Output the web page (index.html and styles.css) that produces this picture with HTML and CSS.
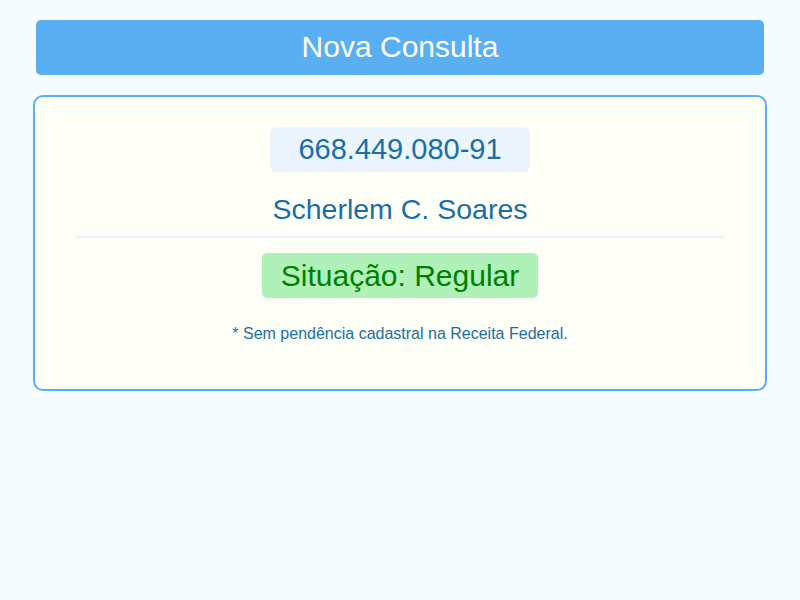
FILE: index.html
```html
<!DOCTYPE html>
<html lang="pt-BR">
<head>
<meta charset="utf-8">
<title>Consulta</title>
<link rel="stylesheet" href="styles.css">
</head>
<body>
<div class="page">
  <button class="new-btn">Nova Consulta</button>
  <section class="card">
    <div class="cpf">668.449.080-91</div>
    <div class="name">Scherlem C. Soares</div>
    <hr class="divider">
    <div class="status">Situação: Regular</div>
    <p class="note">* Sem pendência cadastral na Receita Federal.</p>
  </section>
</div>
</body>
</html>
```
FILE: styles.css
```css
html, body {
  margin: 0;
  padding: 0;
  background: #f6fbff;
  font-family: "Liberation Sans", Arial, sans-serif;
}
.page {
  display: flex;
  flex-direction: column;
  align-items: center;
  padding-top: 20px;
}
.new-btn {
  width: 728px;
  height: 55px;
  border: none;
  border-radius: 5px;
  background: #59aff1;
  color: #ffffff;
  font-family: "Liberation Sans", Arial, sans-serif;
  font-size: 30px;
  padding: 0 0 2px 0;
  margin: 0;
}
.card {
  box-sizing: border-box;
  width: 734px;
  height: 296px;
  margin-top: 20px;
  border: 2px solid #59aff1;
  border-radius: 10px;
  background: #fefff7;
  padding: 30px 41px;
  display: flex;
  flex-direction: column;
  align-items: center;
  color: #1a6ea6;
}
.cpf {
  background: #eaf5fd;
  border-radius: 6px;
  font-size: 29px;
  height: 45px;
  line-height: 45px;
  width: 260px;
  text-align: center;
}
.name {
  font-size: 28.5px;
  margin-top: 20px;
  line-height: 34px;
}
.divider {
  width: 100%;
  border: none;
  border-top: 2px solid #e6f3fb;
  margin: 10px 0 0 0;
}
.status {
  margin-top: 15px;
  background: #b0f0b9;
  color: #008000;
  border-radius: 5px;
  font-size: 30px;
  height: 45px;
  line-height: 45px;
  width: 276px;
  text-align: center;
}
.note {
  margin: 26px 0 0 0;
  font-size: 16px;
  line-height: 20px;
}
```
